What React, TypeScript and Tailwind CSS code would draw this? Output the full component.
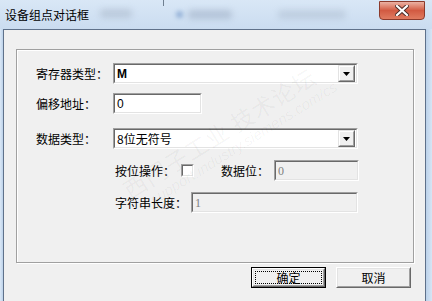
import React from "react";

const cjk = "font-['Noto_Sans_CJK_SC','Noto_Sans',sans-serif]";

function Sunken({
  className,
  disabled,
  children,
}: {
  className: string;
  disabled?: boolean;
  children?: React.ReactNode;
}) {
  return (
    <div
      className={`border border-t-[#a0a0a0] border-l-[#a0a0a0] border-r-white border-b-white ${className}`}
    >
      <div
        className={`h-full flex items-center border border-t-[#696969] border-l-[#696969] border-r-[#e3e3e3] border-b-[#e3e3e3] ${
          disabled ? "bg-[#f0f0f0]" : "bg-white"
        }`}
      >
        {children}
      </div>
    </div>
  );
}

function DropBtn() {
  return (
    <div className="ml-auto mr-[1px] h-[17px] w-[17px] border border-t-[#e3e3e3] border-l-[#e3e3e3] border-r-[#696969] border-b-[#696969]">
      <div className="h-full w-full flex items-center justify-center bg-[#f0f0f0] border border-t-white border-l-white border-r-[#a0a0a0] border-b-[#a0a0a0]">
        <svg width="7" height="4" viewBox="0 0 7 4">
          <path d="M0 0H7L3.5 4Z" fill="#000" />
        </svg>
      </div>
    </div>
  );
}

function Btn({ label, focus }: { label: string; focus?: boolean }) {
  return (
    <div
      className={`h-[21px] w-[75px] ${focus ? "border border-black" : ""}`}
    >
      <div className="h-full w-full border border-t-white border-l-white border-r-[#696969] border-b-[#696969]">
        <div className="h-full w-full border border-t-[#e3e3e3] border-l-[#e3e3e3] border-r-[#a0a0a0] border-b-[#a0a0a0] bg-[#f0f0f0] flex items-center justify-center p-[1px]">
          <div
            className={`h-full w-full flex items-center justify-center ${
              focus ? "border border-dotted border-black" : ""
            }`}
          >
            <span className={`${cjk} text-[12px] leading-none text-black`}>
              {label}
            </span>
          </div>
        </div>
      </div>
    </div>
  );
}

export default function App() {
  return (
    <div className="relative w-[432px] h-[301px] overflow-hidden flex flex-col bg-gradient-to-b from-[#c6daf0] via-[#d4e4f4] to-[#c9dcf1]">
      {/* title bar */}
      <div className="relative h-[29px] flex items-center pl-[5px] bg-gradient-to-b from-[#d9e7f6] to-[#cadcf0]">
        <div className="absolute left-[100px] top-[9px] h-[9px] w-[32px] rounded bg-[#8796aa]/30 blur-[3px]" />
        <div className="absolute left-[163px] top-0 h-[6px] w-[1px] bg-[#6f7f90]" />
        <div className="absolute left-[176px] top-[11px] h-[7px] w-[7px] rounded-full bg-[#4a78b5]/45 blur-[2px]" />
        <div className="absolute left-[188px] top-[10px] h-[9px] w-[44px] rounded bg-[#6f829c]/30 blur-[3px]" />
        <div className="absolute left-[278px] top-[10px] h-[9px] w-[68px] rounded bg-[#8796aa]/25 blur-[3px]" />
        <span className={`${cjk} relative text-[12px] text-black leading-none`}>
          设备组点对话框
        </span>
        <div className="absolute left-[379px] top-[1px] h-[19px] w-[46px] rounded-b-[4px] border border-[#8c3a2c] bg-gradient-to-b from-[#eab1a3] via-[#d25a42] to-[#e07b60] flex items-center justify-center">
          <svg width="14" height="11" viewBox="0 0 14 11">
            <path
              d="M2 1L7 5.5M12 1L7 5.5M2 10L7 5.5M12 10L7 5.5"
              stroke="#4a2a26"
              strokeWidth="4"
              strokeLinecap="square"
            />
            <path
              d="M2 1L7 5.5M12 1L7 5.5M2 10L7 5.5M12 10L7 5.5"
              stroke="#ffffff"
              strokeWidth="2.2"
              strokeLinecap="square"
            />
          </svg>
        </div>
      </div>

      {/* frame + client */}
      <div className="flex flex-1">
        <div className="w-[3px] bg-gradient-to-r from-[#dbe8f6] to-[#bcd2ea]" />
        <div className="relative flex-1 flex flex-col border-l border-t border-r border-[#5f718a] bg-[#f0f0f0]">
          {/* group box */}
          <div className="ml-[12px] mt-[19px] w-[398px] h-[214px] border border-[#a0a0a0] shadow-[1px_1px_0_#ffffff,inset_1px_1px_0_#ffffff] flex flex-col pt-[13px] pl-[19px]">
            <div className="flex items-center h-[21px]">
              <span className={`${cjk} w-[77px] text-[12px] text-black leading-none`}>
                寄存器类型：
              </span>
              <Sunken className="w-[245px] h-[21px]">
                <span className="pl-[2px] font-['Liberation_Sans',sans-serif] font-bold text-[12px] leading-none text-black">
                  M
                </span>
                <DropBtn />
              </Sunken>
            </div>
            <div className="flex items-center h-[21px] mt-[9px]">
              <span className={`${cjk} w-[77px] text-[12px] text-black leading-none`}>
                偏移地址：
              </span>
              <Sunken className="w-[89px] h-[21px]">
                <span className="pl-[2px] font-['Liberation_Sans',sans-serif] text-[12px] leading-none text-black">
                  0
                </span>
              </Sunken>
            </div>
            <div className="flex items-center h-[21px] mt-[14px]">
              <span className={`${cjk} w-[77px] text-[12px] text-black leading-none`}>
                数据类型：
              </span>
              <Sunken className="w-[245px] h-[21px]">
                <span className={`pl-[2px] ${cjk} text-[12px] leading-none text-black`}>
                  8位无符号
                </span>
                <DropBtn />
              </Sunken>
            </div>
            <div className="flex items-center h-[21px] mt-[11px] ml-[79px]">
              <span className={`${cjk} w-[66px] text-[12px] text-black leading-none`}>
                按位操作：
              </span>
              <Sunken className="w-[13px] h-[13px]" />
              <span className={`${cjk} ml-[27px] w-[53px] text-[12px] text-black leading-none`}>
                数据位：
              </span>
              <Sunken className="w-[85px] h-[21px]" disabled>
                <span className="pl-[2px] font-['Liberation_Serif',serif] text-[12px] leading-none text-[#808080]">
                  0
                </span>
              </Sunken>
            </div>
            <div className="flex items-center h-[21px] mt-[11px] ml-[79px]">
              <span className={`${cjk} w-[76px] text-[12px] text-black leading-none`}>
                字符串长度：
              </span>
              <Sunken className="w-[167px] h-[21px]" disabled>
                <span className="pl-[2px] font-['Liberation_Serif',serif] text-[12px] leading-none text-[#808080]">
                  1
                </span>
              </Sunken>
            </div>
          </div>

          {/* buttons */}
          <div className="flex justify-end gap-[10px] mt-[4px] pr-[14px]">
            <Btn label="确定" focus />
            <Btn label="取消" />
          </div>

          {/* watermark */}
          <div className="pointer-events-none select-none absolute left-[220px] top-[110px] -translate-x-1/2 -translate-y-1/2 -rotate-[32deg] flex flex-col items-center whitespace-nowrap">
            <div className={`${cjk} text-[23px] tracking-[1px] leading-none text-black/[0.045]`}>
              西门子工业 技术论坛
            </div>
            <div className="ml-[30px] mt-[2px] font-['Liberation_Sans',sans-serif] italic text-[15px] leading-none text-black/[0.045]">
              support.industry.siemens.com/cs
            </div>
          </div>
        </div>
        <div className="w-[6px] bg-gradient-to-r from-[#bcd2ea] to-[#d6e5f5]" />
      </div>
    </div>
  );
}
